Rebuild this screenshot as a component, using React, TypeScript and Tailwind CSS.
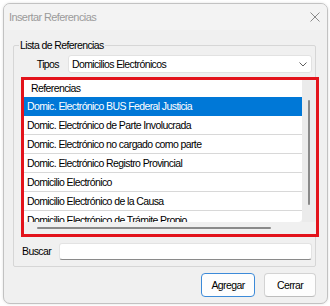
const items = [
  'Domic. Electrónico BUS Federal Justicia',
  'Domic. Electrónico de Parte Involucrada',
  'Domic. Electrónico no cargado como parte',
  'Domic. Electrónico Registro Provincial',
  'Domicilio Electrónico',
  'Domicilio Electrónico de la Causa',
  'Domicilio Electrónico de Trámite Propio',
];

const CloseIcon = () => (
  <svg width="10" height="10" viewBox="0 0 10 10" fill="none" stroke="#8a8a8a" strokeWidth={1}>
    <path d="M0.5 0.5L9.5 9.5M9.5 0.5L0.5 9.5" />
  </svg>
);

const ChevronIcon = () => (
  <svg width="8" height="5" viewBox="0 0 8 5" fill="none" stroke="#5f5f5f" strokeWidth={1}>
    <path d="M0.5 0.5L4 4L7.5 0.5" />
  </svg>
);

export default function App() {
  return (
    <div className="w-[330px] h-[306px] bg-white pt-[3px] pl-[3px] font-['Liberation_Sans',sans-serif] text-[10.5px] tracking-[-0.6px] leading-[13px] text-black">
      <div className="w-[325px] h-[301px] rounded-[7px] border border-[#c2c2c2] bg-[#f0f0f0] overflow-hidden flex flex-col shadow-[0_0_3px_rgba(0,0,0,0.12)]">
        {/* Title bar */}
        <div className="h-[26px] bg-[#f3f3f3] flex items-center justify-between pl-[5px] pr-[7px] shrink-0">
          <span className="text-[11px] text-[#9b9b9b]">Insertar Referencias</span>
          <CloseIcon />
        </div>

        {/* Body */}
        <div className="pt-[9px] flex-1 flex flex-col">
          <fieldset className="ml-[9px] w-[303px] border border-[#d6d6d6] rounded-[2px]">
            <legend className="ml-[5px] px-[1px] leading-[13px]">Lista de Referencias</legend>
            <div className="pl-[7px] pr-[3px] pt-[3px] pb-[7px] flex flex-col">
              {/* Tipos */}
              <div className="flex items-center h-[18px]">
                <span className="w-[39px] pr-[1px] text-right">Tipos</span>
                <div className="ml-[8px] flex-1 h-[18px] bg-white border border-[#e2e2e2] rounded-[3px] flex items-center justify-between pl-[3px] pr-[4px]">
                  <span>Domicilios Electrónicos</span>
                  <ChevronIcon />
                </div>
              </div>

              {/* Referencias list (highlighted) */}
              <div className="mt-[4px] mr-[-7px] h-[160px] border-[3px] border-[#e3131b] bg-[#f0f0f0] flex flex-col">
                <div className="h-[142px] flex">
                  <div className="w-[278px] bg-white overflow-hidden rounded-br-[4px]">
                    <div className="h-[17px] flex items-center pl-[7px]">Referencias</div>
                    {items.map((it, i) => (
                      <div
                        key={it}
                        className={
                          i === 0
                            ? 'h-[19px] flex items-center pl-[3px] bg-[#0078d7] text-white border-b border-[#0078d7]'
                            : 'h-[19px] flex items-center pl-[3px] border-b border-[#d8d8d8] whitespace-nowrap'
                        }
                      >
                        {it}
                      </div>
                    ))}
                  </div>
                  <div className="flex-1 bg-[#ebebeb] rounded-r-[3px] pt-[20px] pl-[6px]">
                    <div className="w-[2px] h-[105px] bg-[#8a8a8a] rounded-full" />
                  </div>
                </div>
                <div className="h-[12px] pt-[5px] pl-[13px]">
                  <div className="w-[234px] h-[2px] bg-[#8a8a8a] rounded-full" />
                </div>
              </div>

              {/* Buscar */}
              <div className="mt-[6px] flex items-center h-[16px]">
                <span className="w-[38px] pl-[1px]">Buscar</span>
                <div className="flex-1 h-[17px] bg-white border border-[#e3e3e3] border-b-[#8a8a8a] rounded-[3px]" />
              </div>
            </div>
          </fieldset>

          {/* Buttons */}
          <div className="mt-[6px] flex justify-end gap-[9px] pr-[11px]">
            <button className="w-[54px] h-[24px] rounded-[4px] border border-[#3c8ad8] bg-[#fdfdfd] flex items-center justify-center">
              Agregar
            </button>
            <button className="w-[52px] h-[24px] rounded-[4px] border border-[#d3d3d3] border-b-[#bdbdbd] bg-[#fdfdfd] flex items-center justify-center">
              Cerrar
            </button>
          </div>
        </div>
      </div>
    </div>
  );
}
